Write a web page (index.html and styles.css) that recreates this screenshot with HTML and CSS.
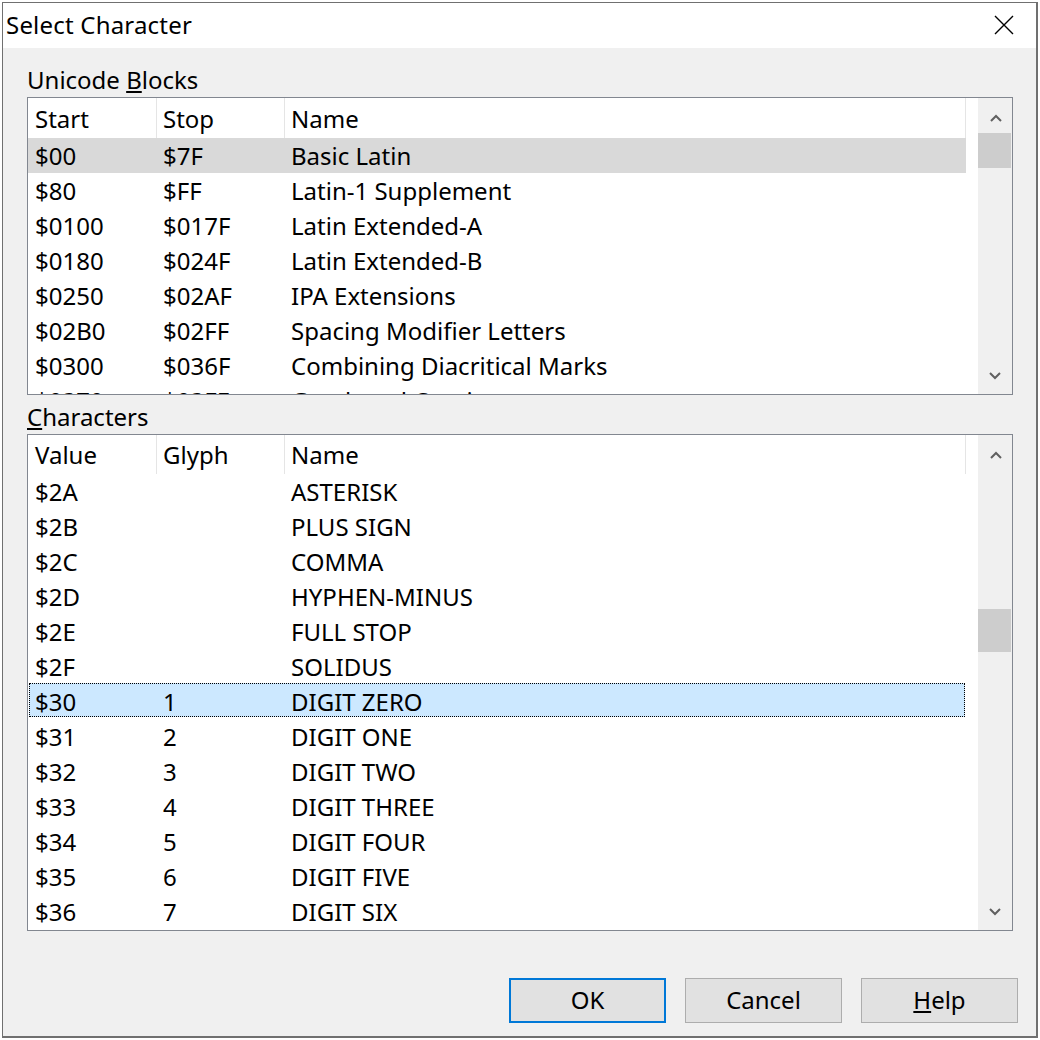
FILE: index.html
```html
<!DOCTYPE html>
<html>
<head>
<meta charset="utf-8">
<title>Select Character</title>
<link rel="stylesheet" href="styles.css">
</head>
<body>
<div class="window">
  <div class="titlebar">
    <span class="title">Select Character</span>
    <svg class="close" width="20" height="20" viewBox="0 0 20 20"><path d="M1 1L19 19M19 1L1 19" stroke="#000" stroke-width="1.4" fill="none"/></svg>
  </div>
  <div class="content">
    <div class="label">Unicode <u>B</u>locks</div>
    <div class="listbox lb1">
      <div class="listmain">
        <div class="row head"><div class="c">Start</div><div class="c">Stop</div><div class="c">Name</div></div>
        <div class="row sel"><div class="c">$00</div><div class="c">$7F</div><div class="c">Basic Latin</div></div>
        <div class="row"><div class="c">$80</div><div class="c">$FF</div><div class="c">Latin-1 Supplement</div></div>
        <div class="row"><div class="c">$0100</div><div class="c">$017F</div><div class="c">Latin Extended-A</div></div>
        <div class="row"><div class="c">$0180</div><div class="c">$024F</div><div class="c">Latin Extended-B</div></div>
        <div class="row"><div class="c">$0250</div><div class="c">$02AF</div><div class="c">IPA Extensions</div></div>
        <div class="row"><div class="c">$02B0</div><div class="c">$02FF</div><div class="c">Spacing Modifier Letters</div></div>
        <div class="row"><div class="c">$0300</div><div class="c">$036F</div><div class="c">Combining Diacritical Marks</div></div>
        <div class="row"><div class="c">$0370</div><div class="c">$03FF</div><div class="c">Greek and Coptic</div></div>
      </div>
      <div class="scrollbar">
        <div class="sb-up"><svg width="12" height="8" viewBox="0 0 12 8"><polyline points="1,7 6,2 11,7" stroke="#606060" stroke-width="2" fill="none"/></svg></div>
        <div class="track"><div class="thumb" style="margin-top:0px;height:35px"></div></div>
        <div class="sb-down"><svg width="12" height="8" viewBox="0 0 12 8"><polyline points="1,1 6,6 11,1" stroke="#606060" stroke-width="2" fill="none"/></svg></div>
      </div>
    </div>
    <div class="label second"><u>C</u>haracters</div>
    <div class="listbox lb2">
      <div class="listmain">
        <div class="row head"><div class="c">Value</div><div class="c">Glyph</div><div class="c">Name</div></div>
        <div class="row"><div class="c">$2A</div><div class="c"></div><div class="c">ASTERISK</div></div>
        <div class="row"><div class="c">$2B</div><div class="c"></div><div class="c">PLUS SIGN</div></div>
        <div class="row"><div class="c">$2C</div><div class="c"></div><div class="c">COMMA</div></div>
        <div class="row"><div class="c">$2D</div><div class="c"></div><div class="c">HYPHEN-MINUS</div></div>
        <div class="row"><div class="c">$2E</div><div class="c"></div><div class="c">FULL STOP</div></div>
        <div class="row"><div class="c">$2F</div><div class="c"></div><div class="c">SOLIDUS</div></div>
        <div class="row focus"><div class="c">$30</div><div class="c">1</div><div class="c">DIGIT ZERO</div></div>
        <div class="row"><div class="c">$31</div><div class="c">2</div><div class="c">DIGIT ONE</div></div>
        <div class="row"><div class="c">$32</div><div class="c">3</div><div class="c">DIGIT TWO</div></div>
        <div class="row"><div class="c">$33</div><div class="c">4</div><div class="c">DIGIT THREE</div></div>
        <div class="row"><div class="c">$34</div><div class="c">5</div><div class="c">DIGIT FOUR</div></div>
        <div class="row"><div class="c">$35</div><div class="c">6</div><div class="c">DIGIT FIVE</div></div>
        <div class="row"><div class="c">$36</div><div class="c">7</div><div class="c">DIGIT SIX</div></div>
      </div>
      <div class="scrollbar">
        <div class="sb-up"><svg width="12" height="8" viewBox="0 0 12 8"><polyline points="1,7 6,2 11,7" stroke="#606060" stroke-width="2" fill="none"/></svg></div>
        <div class="track"><div class="thumb" style="margin-top:139px;height:43px"></div></div>
        <div class="sb-down"><svg width="12" height="8" viewBox="0 0 12 8"><polyline points="1,1 6,6 11,1" stroke="#606060" stroke-width="2" fill="none"/></svg></div>
      </div>
    </div>
    <div class="buttons">
      <button class="btn default">OK</button>
      <button class="btn">Cancel</button>
      <button class="btn"><u>H</u>elp</button>
    </div>
  </div>
</div>
</body>
</html>
```
FILE: styles.css
```css
* { box-sizing: border-box; }
html, body { margin: 0; padding: 0; background: #fff; }
body {
  font-family: "Noto Sans", "Open Sans", sans-serif;
  font-size: 24px;
  letter-spacing: 0;
  color: #000;
}
.window {
  margin: 2px 0 0 2px;
  width: 1036px;
  height: 1036px;
  border: 1px solid #707070;
  border-right-width: 2px;
  border-bottom-width: 2px;
  background: #f0f0f0;
  display: flex;
  flex-direction: column;
}
.titlebar {
  height: 45px;
  flex: none;
  background: #fff;
  display: flex;
  align-items: center;
  justify-content: space-between;
  padding: 0 22px 0 3px;
}
.title { line-height: 43px; padding-bottom: 2px; letter-spacing: 0.2px; }
.close { display: block; margin-bottom: 2px; }
.content {
  flex: 1;
  display: flex;
  flex-direction: column;
  padding: 17px 18px 0 24px;
}
.label { height: 30px; line-height: 30px; margin-bottom: 2px; }
.label.second { margin-top: 7px; }
.listbox {
  width: 986px;
  flex: none;
  border: 1px solid #828790;
  background: #fff;
  display: flex;
}
.lb1 { height: 298px; }
.lb2 { height: 497px; }
.listmain { width: 950px; overflow: hidden; }
.row {
  display: grid;
  grid-template-columns: 129px 128px 681px;
  width: 938px;
  height: 35px;
  line-height: 35px;
  white-space: nowrap;
  position: relative;
}
.row .c { padding-left: 6px; position: relative; z-index: 1; }
.row .c:first-child { padding-left: 7px; }
.row.head { height: 40px; }
.row.head .c { height: 40px; line-height: 42px; border-right: 1px solid #e5e5e5; }
.lb2 .row.head { height: 39px; }
.lb2 .row.head .c { height: 39px; line-height: 40px; }
.row.sel { background: #d9d9d9; }
.row.focus::before {
  content: "";
  position: absolute;
  left: 1px;
  right: 1px;
  top: -1px;
  bottom: 2px;
  background: #cce8ff;
  outline: 1px dotted #000;
  outline-offset: -1px;
  z-index: 0;
}
.scrollbar {
  width: 34px;
  background: #f0f0f0;
  display: flex;
  flex-direction: column;
}
.sb-up { height: 35px; flex: none; display: flex; justify-content: center; align-items: flex-start; padding-top: 16px; padding-left: 1px; }
.sb-down { height: 35px; flex: none; display: flex; justify-content: center; align-items: flex-start; padding-top: 13px; }
.sb-up svg, .sb-down svg { display: block; }
.track { flex: 1; }
.thumb { width: 33px; background: #cdcdcd; }
.buttons {
  display: flex;
  justify-content: flex-end;
  gap: 19px;
  margin-top: 47px;
}
.btn {
  width: 157px;
  height: 45px;
  border: 1px solid #adadad;
  background: #e1e1e1;
  font: inherit;
  letter-spacing: inherit;
  color: #000;
  padding: 0 0 2px 0;
  display: flex;
  align-items: center;
  justify-content: center;
}
.btn.default { border: 2px solid #0078d7; }
```
